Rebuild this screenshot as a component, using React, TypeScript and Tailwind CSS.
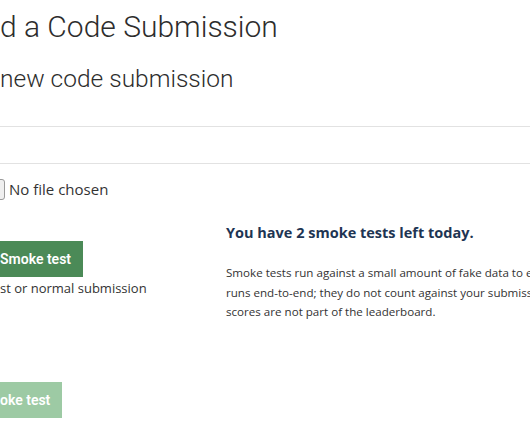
export default function App() {
  return (
    <div className="w-[530px] h-[443px] overflow-hidden bg-white text-[#333] [font-family:'Open_Sans',sans-serif]">
      <div className="pt-[7px]">
        <h1 className="text-[30px] leading-[40px] text-[#2d2d2d] [font-family:Roboto,sans-serif] font-light whitespace-nowrap">
          d a Code Submission
        </h1>
        <h2 className="mt-[16px] text-[24.5px] leading-[32px] text-[#2d2d2d] [font-family:Roboto,sans-serif] font-light whitespace-nowrap">
          new code submission
        </h2>

        <div className="mt-[31px] h-[38px] border-t border-b border-[#e2e2e2]" />

        <div className="mt-[15px] flex items-center gap-[4px]">
          <span className="ml-[-20px] w-[25px] h-[21px] rounded-[3px] border border-[#9a9a9a] bg-[#efefef]" />
          <span className="text-[15px] leading-[21px]">No file chosen</span>
        </div>

        <div className="mt-[41px] flex">
          <div className="w-[226px] shrink-0">
            <button className="ml-[-30px] h-[36px] pl-[30px] pr-[12px] bg-[#4b8a57] text-white text-[14px] font-semibold [font-family:Roboto,sans-serif]">
              Smoke test
            </button>
            <p className="mt-[2px] text-[13px] leading-[18px] whitespace-nowrap">st or normal submission</p>

            <button className="mt-[85px] ml-[-30px] h-[36px] pl-[30px] pr-[12px] bg-[#9dcaa4] text-white text-[14px] font-semibold [font-family:Roboto,sans-serif]">
              oke test
            </button>
          </div>

          <div className="mt-[-19px] whitespace-nowrap">
            <h3 className="text-[14.5px] leading-[22px] font-bold text-[#1e3553]">
              You have 2 smoke tests left today.
            </h3>
            <p className="mt-[19px] text-[11.6px] leading-[19.5px]">
              Smoke tests run against a small amount of fake data to ensure your code
              <br />
              runs end-to-end; they do not count against your submission limit and their
              <br />
              scores are not part of the leaderboard.
            </p>
          </div>
        </div>
      </div>
    </div>
  );
}
